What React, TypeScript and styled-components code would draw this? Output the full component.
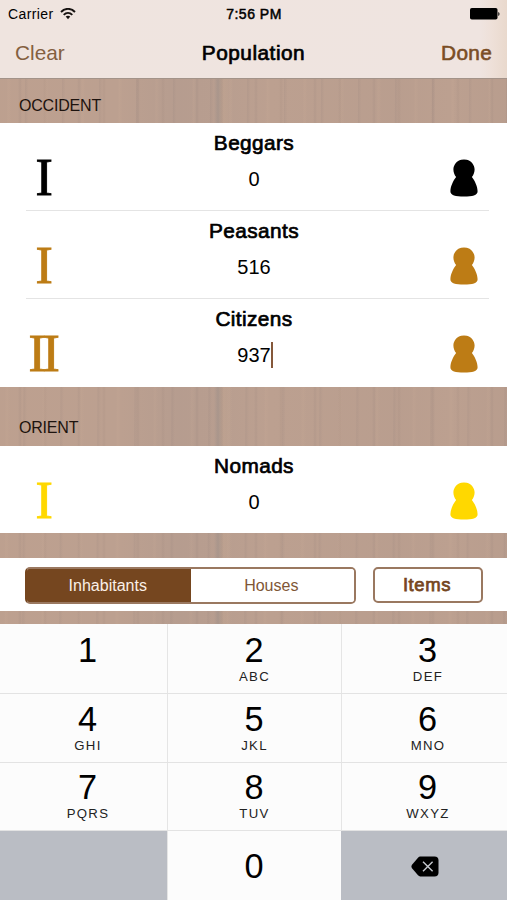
import React from 'react';
import styled, { createGlobalStyle } from 'styled-components';

const BROWN = '#75461f';

const GlobalStyle = createGlobalStyle`
  * { box-sizing: border-box; }
  body { margin: 0; }
  button { font-family: inherit; border: 0; padding: 0; background: none; color: inherit; }
`;

const Screen = styled.div`
  width: 507px;
  height: 900px;
  overflow: hidden;
  display: flex;
  flex-direction: column;
  font-family: 'Liberation Sans', Arial, sans-serif;
  color: #000;
  background-color: #bca090;
  background-image:
    repeating-linear-gradient(90deg, transparent 0 18px, rgba(120, 105, 105, 0.1) 20px, transparent 22px 43px, rgba(120, 100, 95, 0.08) 45px, transparent 47px 59px),
    repeating-linear-gradient(90.3deg, transparent 0 7px, rgba(210, 178, 155, 0.12) 9px, transparent 12px 25px, rgba(105, 95, 100, 0.08) 26px, transparent 29px 37px),
    linear-gradient(90deg, transparent 214px, rgba(125, 125, 128, 0.25) 218px, rgba(200, 170, 145, 0.3) 223px, transparent 232px),
    linear-gradient(90deg, rgba(192, 160, 140, 0.2) 0, transparent 120px, rgba(150, 138, 138, 0.16) 180px, rgba(150, 138, 138, 0.1) 220px, transparent 270px, rgba(165, 142, 132, 0.12) 400px, transparent 450px, rgba(170, 145, 132, 0.2) 507px);
`;

const Header = styled.header`
  height: 79px;
  flex: none;
  display: flex;
  flex-direction: column;
  border-bottom: 1px solid #a39389;
  background: linear-gradient(90deg, #efe4df 0, #efe4e0 480px, #eee0d8 492px, #e9d9cd 507px);
`;

const StatusBar = styled.div`
  height: 27px;
  display: grid;
  grid-template-columns: 1fr auto 1fr;
  align-items: center;
  padding: 1px 7px 0 8px;
  font-size: 14px;
`;

const Carrier = styled.span`
  display: flex;
  align-items: center;
  gap: 6px;
  letter-spacing: 0.4px;
`;

const Clock = styled.span`
  letter-spacing: 0.5px;
  -webkit-text-stroke: 0.5px #000;
`;

const Battery = styled.svg`
  justify-self: end;
`;

const NavBar = styled.nav`
  flex: 1;
  display: grid;
  grid-template-columns: 1fr auto 1fr;
  align-items: center;
  padding: 0 15px 0 15px;
`;

const NavButton = styled.button<{ $strong?: boolean }>`
  justify-self: ${p => (p.$strong ? 'end' : 'start')};
  font-size: 20.8px;
  color: ${p => (p.$strong ? '#7a4d24' : '#84603f')};
  letter-spacing: ${p => (p.$strong ? '0.3px' : '0')};
  -webkit-text-stroke: ${p => (p.$strong ? '0.6px' : '0')} currentColor;
`;

const Title = styled.h1`
  margin: 0;
  font-size: 20.8px;
  font-weight: 400;
  letter-spacing: 0.5px;
  -webkit-text-stroke: 0.7px #000;
`;

const SectionTitle = styled.h2<{ $height: number; $raise: number }>`
  height: ${p => p.$height}px;
  flex: none;
  margin: 0;
  padding: 0 19px ${p => p.$raise}px;
  display: flex;
  align-items: flex-end;
  font-size: 16px;
  line-height: 20px;
  letter-spacing: -0.2px;
  font-weight: 400;
  color: #1d130e;
`;

const Group = styled.section`
  flex: none;
  background: #fff;
`;

const Row = styled.div<{ $height?: number; $last?: boolean }>`
  height: ${p => p.$height ?? 88}px;
  display: grid;
  grid-template-columns: 36px 1fr 28px;
  margin: 0 18px 0 26px;
  padding-right: 11px;
  border-bottom: ${p => (p.$last ? 0 : '1px solid #e4e4e4')};
`;

const Numeral = styled.span`
  align-self: start;
  justify-self: center;
  padding-top: 25px;
  font-family: 'Liberation Serif', 'Times New Roman', serif;
  font-size: 52px;
  line-height: 60px;
  letter-spacing: -3.2px;
  margin-right: -3.2px;
  transform: translateX(-3px);
  -webkit-text-stroke: 0.9px currentColor;
`;

const Pawn = styled.svg`
  align-self: start;
  margin-top: 36px;
`;

const Tier = styled.div<{ $tone: string }>`
  display: contents;
  ${Numeral}, ${Pawn} { color: ${p => p.$tone}; }
`;

const Field = styled.div`
  display: flex;
  flex-direction: column;
  align-items: center;
  padding: 7px 4px 0 0;
`;

const Name = styled.div`
  font-size: 20.8px;
  line-height: 25px;
  letter-spacing: 0.4px;
  -webkit-text-stroke: 0.7px #000;
`;

const Count = styled.div`
  display: flex;
  align-items: center;
  height: 26px;
  margin-top: 11px;
  font-size: 20px;
`;

const Caret = styled.span`
  width: 2px;
  height: 26px;
  margin-right: -2px;
  background: #85583a;
`;

const Toolbar = styled.div`
  height: 53px;
  flex: none;
  margin-top: 25px;
  padding: 9px 24px 0 25px;
  display: flex;
  justify-content: space-between;
  background: #fff;
`;

const Segments = styled.div`
  width: 331px;
  height: 37px;
  display: grid;
  grid-template-columns: 1fr 1fr;
  overflow: hidden;
  border: 2px solid #9a7860;
  border-color: #9a7860 #9a7860 #9a7860 ${BROWN};
  border-radius: 5px;
`;

const Segment = styled.button<{ $active?: boolean }>`
  font-size: 16px;
  padding: 1px 2px 0 0;
  color: ${p => (p.$active ? '#fbf0e8' : '#805636')};
  background: ${p => (p.$active ? BROWN : '#fff')};
  box-shadow: ${p => (p.$active ? `0 0 0 2px ${BROWN}` : 'none')};
`;

const ItemsButton = styled.button`
  width: 110px;
  height: 36px;
  border: 2px solid #9a7860;
  border-radius: 5px;
  font-size: 18.5px;
  letter-spacing: 0.6px;
  padding: 0 2px 0 0;
  color: ${BROWN};
  -webkit-text-stroke: 0.75px ${BROWN};
`;

const Keypad = styled.div`
  flex: 1;
  margin-top: 13px;
  display: grid;
  grid-template-columns: 167px 174px 166px;
  grid-template-rows: 70px 69px 68px 1fr;
`;

const Key = styled.button<{ $column: number; $row: number }>`
  display: flex;
  flex-direction: column;
  align-items: center;
  padding-top: ${p => [6, 5, 4, 15][p.$row]}px;
  padding-left: ${p => [8, 0, 7][p.$column]}px;
  background: #fcfcfc;
  border: solid #e3e3e3;
  border-width: ${p => (p.$row === 3 ? '0' : '0 0 1px')};
  box-shadow: ${p => (p.$column === 0 ? 'none' : 'inset 1px 0 #e5e5e5')};
`;

const UtilityKey = styled.button`
  display: flex;
  align-items: center;
  justify-content: center;
  padding: 2px 0 0 1px;
  background: #babdc4;
`;

const Digit = styled.span`
  font-size: 34.3px;
  line-height: 40px;
`;

const Letters = styled.span`
  margin-top: -1px;
  font-size: 13.2px;
  line-height: 16px;
  letter-spacing: 1.3px;
  margin-right: -1px;
  color: #222;
`;

function WifiIcon() {
  return (
    <svg width="16" height="12" viewBox="0 0 16 12" fill="none" stroke="#161210">
      <path d="M1 4C5-.2 11-.2 15 4" strokeWidth="1.9" />
      <path d="M3.7 6.8c2.6-2.6 6-2.6 8.6 0" strokeWidth="1.9" />
      <path d="M5.7 8.6c1.5-1.2 3.1-1.2 4.6 0L8 11.2z" fill="#161210" stroke="none" />
    </svg>
  );
}

function BatteryIcon() {
  return (
    <Battery width="30" height="12" viewBox="0 0 30 12">
      <rect x="0" y="0" width="27.5" height="11.5" rx="1.8" />
      <path d="M28.3 4c1.6.5 1.6 3.5 0 4z" />
    </Battery>
  );
}

function PawnIcon() {
  return (
    <Pawn width="28" height="38" viewBox="0 0 28 38" fill="currentColor">
      <path d="M11.2.7Q14 .1 16.8.7C21.2 1.7 24.6 5.8 24.6 10.5c0 2.9-1.1 5.5-2.7 7.6 2.9 3.8 5.6 9.2 5.7 14.1 0 4.1-5.1 5.2-13.6 5.2S.4 36.3.4 32.2c.1-4.9 2.8-10.3 5.7-14.1C4.5 16 3.4 13.4 3.4 10.5 3.4 5.8 6.8 1.7 11.2.7z" />
    </Pawn>
  );
}

function DeleteIcon() {
  return (
    <svg width="28" height="21" viewBox="0 0 28 21">
      <path d="M9.2.5H23.5Q27.5.5 27.5 4.5v12q0 4-4 4H9.2Q8 20.3 7 19.3L.8 12Q0 10.5.8 9L7 1.7Q8 .6 9.2.5z" />
      <path d="M12 5.7l9.6 9.6M21.6 5.7L12 15.3" stroke="#c5c8ce" strokeWidth="1.4" />
    </svg>
  );
}

interface PopulationProps {
  name: string;
  count: number;
  numeral: string;
  tone: string;
  editing?: boolean;
  last?: boolean;
  height?: number;
}

function PopulationRow({ name, count, numeral, tone, editing, last, height }: PopulationProps) {
  return (
    <Row $last={last} $height={height}>
      <Tier $tone={tone}>
        <Numeral>{numeral}</Numeral>
        <Field>
          <Name>{name}</Name>
          <Count>{count}{editing && <Caret />}</Count>
        </Field>
        <PawnIcon />
      </Tier>
    </Row>
  );
}

const keys = [
  ['1', ''], ['2', 'ABC'], ['3', 'DEF'],
  ['4', 'GHI'], ['5', 'JKL'], ['6', 'MNO'],
  ['7', 'PQRS'], ['8', 'TUV'], ['9', 'WXYZ'],
];

export default function App() {
  return (
    <>
      <GlobalStyle />
      <Screen>
        <Header>
          <StatusBar>
            <Carrier>Carrier <WifiIcon /></Carrier>
            <Clock>7:56 PM</Clock>
            <BatteryIcon />
          </StatusBar>
          <NavBar>
            <NavButton>Clear</NavButton>
            <Title>Population</Title>
            <NavButton $strong>Done</NavButton>
          </NavBar>
        </Header>
        <SectionTitle $height={44} $raise={7}>OCCIDENT</SectionTitle>
        <Group>
          <PopulationRow name="Beggars" count={0} numeral="I" tone="#000" />
          <PopulationRow name="Peasants" count={516} numeral="I" tone="#bd7c15" />
          <PopulationRow name="Citizens" count={937} numeral="II" tone="#bd7c15" editing last />
        </Group>
        <SectionTitle $height={59} $raise={8}>ORIENT</SectionTitle>
        <Group>
          <PopulationRow name="Nomads" count={0} numeral="I" tone="#ffd800" last height={87} />
        </Group>
        <Toolbar>
          <Segments>
            <Segment $active>Inhabitants</Segment>
            <Segment>Houses</Segment>
          </Segments>
          <ItemsButton>Items</ItemsButton>
        </Toolbar>
        <Keypad>
          {keys.map(([digit, letters], i) => (
            <Key key={digit} $column={i % 3} $row={Math.floor(i / 3)}>
              <Digit>{digit}</Digit>
              {letters && <Letters>{letters}</Letters>}
            </Key>
          ))}
          <UtilityKey aria-label="Blank" />
          <Key $column={1} $row={3}><Digit>0</Digit></Key>
          <UtilityKey aria-label="Delete"><DeleteIcon /></UtilityKey>
        </Keypad>
      </Screen>
    </>
  );
}
